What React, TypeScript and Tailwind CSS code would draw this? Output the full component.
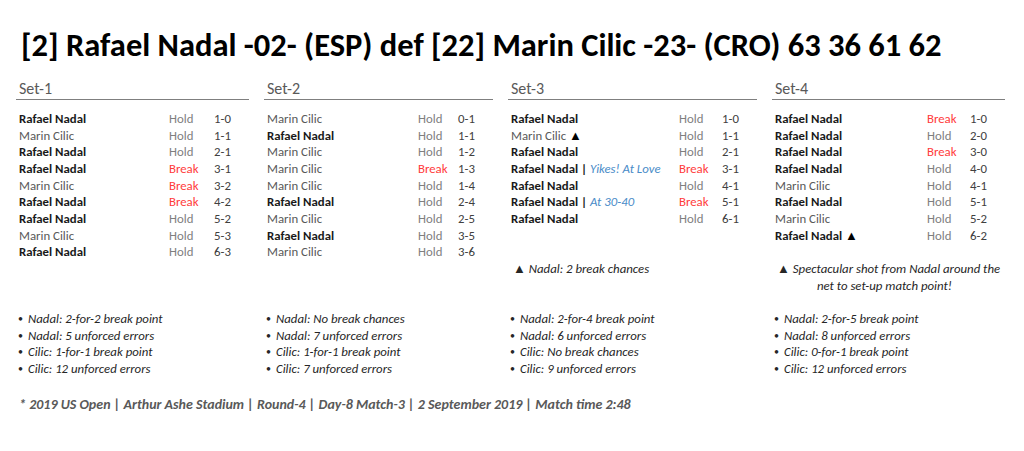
import React from "react";

type Game = { p: "N" | "C"; a: "Hold" | "Break"; s: string; mark?: boolean; note?: string };

const N = "Rafael Nadal";
const C = "Marin Cilic";

const SETS: { title: string; actW: string; games: Game[]; note?: React.ReactNode; bullets: string[] }[] = [
  {
    title: "Set-1",
    actW: "w-[45px]",
    games: [
      { p: "N", a: "Hold", s: "1-0" },
      { p: "C", a: "Hold", s: "1-1" },
      { p: "N", a: "Hold", s: "2-1" },
      { p: "N", a: "Break", s: "3-1" },
      { p: "C", a: "Break", s: "3-2" },
      { p: "N", a: "Break", s: "4-2" },
      { p: "N", a: "Hold", s: "5-2" },
      { p: "C", a: "Hold", s: "5-3" },
      { p: "N", a: "Hold", s: "6-3" },
    ],
    bullets: ["Nadal: 2-for-2 break point", "Nadal: 5 unforced errors", "Cilic: 1-for-1 break point", "Cilic: 12 unforced errors"],
  },
  {
    title: "Set-2",
    actW: "w-[40px]",
    games: [
      { p: "C", a: "Hold", s: "0-1" },
      { p: "N", a: "Hold", s: "1-1" },
      { p: "C", a: "Hold", s: "1-2" },
      { p: "C", a: "Break", s: "1-3" },
      { p: "C", a: "Hold", s: "1-4" },
      { p: "N", a: "Hold", s: "2-4" },
      { p: "C", a: "Hold", s: "2-5" },
      { p: "N", a: "Hold", s: "3-5" },
      { p: "C", a: "Hold", s: "3-6" },
    ],
    bullets: ["Nadal: No break chances", "Nadal: 7 unforced errors", "Cilic: 1-for-1 break point", "Cilic: 7 unforced errors"],
  },
  {
    title: "Set-3",
    actW: "w-[43px]",
    games: [
      { p: "N", a: "Hold", s: "1-0" },
      { p: "C", a: "Hold", s: "1-1", mark: true },
      { p: "N", a: "Hold", s: "2-1" },
      { p: "N", a: "Break", s: "3-1", note: "Yikes! At Love" },
      { p: "N", a: "Hold", s: "4-1" },
      { p: "N", a: "Break", s: "5-1", note: "At 30-40" },
      { p: "N", a: "Hold", s: "6-1" },
    ],
    note: (
      <p className="pl-[5px]">
        <span className="not-italic text-[13px]">▲</span> Nadal: 2 break chances
      </p>
    ),
    bullets: ["Nadal: 2-for-4 break point", "Nadal: 6 unforced errors", "Cilic: No break chances", "Cilic: 9 unforced errors"],
  },
  {
    title: "Set-4",
    actW: "w-[43px]",
    games: [
      { p: "N", a: "Break", s: "1-0" },
      { p: "N", a: "Hold", s: "2-0" },
      { p: "N", a: "Break", s: "3-0" },
      { p: "N", a: "Hold", s: "4-0" },
      { p: "C", a: "Hold", s: "4-1" },
      { p: "N", a: "Hold", s: "5-1" },
      { p: "C", a: "Hold", s: "5-2" },
      { p: "N", a: "Hold", s: "6-2", mark: true },
    ],
    note: (
      <p className="pl-[5px]">
        <span className="not-italic text-[13px]">▲</span> Spectacular shot from Nadal around the
        <br />
        <span className="pl-[26px]">net to set-up match point!</span>
      </p>
    ),
    bullets: ["Nadal: 2-for-5 break point", "Nadal: 8 unforced errors", "Cilic: 0-for-1 break point", "Cilic: 12 unforced errors"],
  },
];

export default function App() {
  return (
    <div className="w-[1024px] h-[451px] bg-white font-['Carlito','Lato',sans-serif] overflow-hidden">
      <h1 className="mt-[27px] h-[36px] pl-[21px] text-[32.5px] leading-[36px] font-bold text-black whitespace-nowrap">
        [2] Rafael Nadal -02- (ESP) def [22] Marin Cilic -23- (CRO) 63 36 61 62
      </h1>

      <div className="mt-[18px] pl-[16px] grid grid-cols-[233px_229px_249px_233px] gap-x-[15px]">
        {SETS.map((set) => (
          <div key={set.title}>
            <div className="h-[19px] border-b border-[#7f7f7f] pl-[3px] text-[16px] leading-[15px] text-[#595959]">
              {set.title}
            </div>

            <div className="mt-[11px] h-[150px] text-[12.8px] leading-[16.67px]">
              {set.games.map((g, i) => (
                <div key={i} className="flex pl-[3px] whitespace-nowrap">
                  <div className="flex-1">
                    {g.p === "N" ? (
                      <span className="font-bold text-[#1a1a1a]">{N}</span>
                    ) : (
                      <span className="text-[#595959]">{C}</span>
                    )}
                    {g.mark && <span className="text-[13px] text-black"> ▲</span>}
                    {g.note && (
                      <>
                        <span className="font-bold text-[#1a1a1a]"> | </span>
                        <span className="italic text-[#4a8cc8]">{g.note}</span>
                      </>
                    )}
                  </div>
                  <div className={`${set.actW} ${g.a === "Break" ? "text-[#ff3b3b]" : "text-[#7f7f7f]"}`}>{g.a}</div>
                  <div className="w-[35px] text-[#404040]">{g.s}</div>
                </div>
              ))}
            </div>

            <div className="h-[50px] text-[12.8px] leading-[16.67px] italic text-[#262626] whitespace-nowrap [&_br+span]:pl-[40px]">
              {set.note}
            </div>

            <ul className="text-[12.8px] leading-[16.67px] italic text-[#262626]">
              {set.bullets.map((b) => (
                <li key={b} className="flex pl-[2px]">
                  <span className="w-[10px] not-italic text-[10px]">•</span>
                  <span>{b}</span>
                </li>
              ))}
            </ul>
          </div>
        ))}
      </div>

      <p className="mt-[19px] pl-[19px] text-[14px] leading-[16px] font-bold italic text-[#595959]">
        * 2019 US Open | Arthur Ashe Stadium | Round-4 | Day-8 Match-3 | 2 September 2019 | Match time 2:48
      </p>
    </div>
  );
}
